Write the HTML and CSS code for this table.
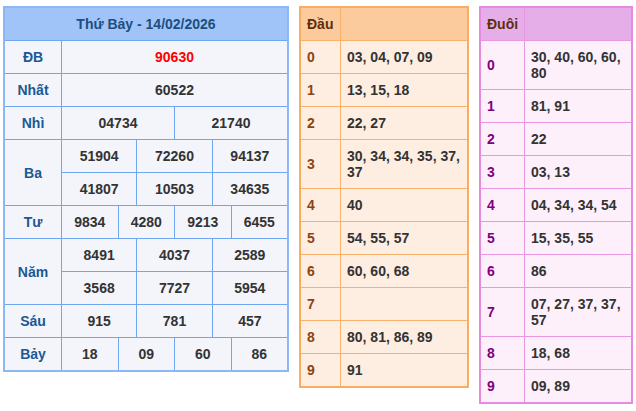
FILE: index.html
```html
<!DOCTYPE html>
<html lang="vi">
<head>
<meta charset="utf-8">
<title>Kết quả xổ số</title>
<link rel="stylesheet" href="styles.css">
</head>
<body>
<div class="page">
  <div class="kq">
    <div class="kq-title">Thứ Bảy - 14/02/2026</div>
    <div class="lbl">ĐB</div><div class="val s12 red">90630</div>
    <div class="lbl">Nhất</div><div class="val s12">60522</div>
    <div class="lbl">Nhì</div><div class="val s6">04734</div><div class="val s6">21740</div>
    <div class="lbl r2">Ba</div>
    <div class="val s4">51904</div><div class="val s4">72260</div><div class="val s4">94137</div>
    <div class="val s4">41807</div><div class="val s4">10503</div><div class="val s4">34635</div>
    <div class="lbl">Tư</div>
    <div class="val s3">9834</div><div class="val s3">4280</div><div class="val s3">9213</div><div class="val s3">6455</div>
    <div class="lbl r2">Năm</div>
    <div class="val s4">8491</div><div class="val s4">4037</div><div class="val s4">2589</div>
    <div class="val s4">3568</div><div class="val s4">7727</div><div class="val s4">5954</div>
    <div class="lbl">Sáu</div>
    <div class="val s4">915</div><div class="val s4">781</div><div class="val s4">457</div>
    <div class="lbl">Bảy</div>
    <div class="val s3">18</div><div class="val s3">09</div><div class="val s3">60</div><div class="val s3">86</div>
  </div>

  <div class="lt dau">
    <div class="lt-head">Đầu</div><div class="lt-head"></div>
    <div class="lt-key">0</div><div class="lt-val">03, 04, 07, 09</div>
    <div class="lt-key">1</div><div class="lt-val">13, 15, 18</div>
    <div class="lt-key">2</div><div class="lt-val">22, 27</div>
    <div class="lt-key">3</div><div class="lt-val">30, 34, 34, 35, 37, 37</div>
    <div class="lt-key">4</div><div class="lt-val">40</div>
    <div class="lt-key">5</div><div class="lt-val">54, 55, 57</div>
    <div class="lt-key">6</div><div class="lt-val">60, 60, 68</div>
    <div class="lt-key">7</div><div class="lt-val"></div>
    <div class="lt-key">8</div><div class="lt-val">80, 81, 86, 89</div>
    <div class="lt-key">9</div><div class="lt-val">91</div>
  </div>

  <div class="lt duoi">
    <div class="lt-head">Đuôi</div><div class="lt-head"></div>
    <div class="lt-key">0</div><div class="lt-val">30, 40, 60, 60, 80</div>
    <div class="lt-key">1</div><div class="lt-val">81, 91</div>
    <div class="lt-key">2</div><div class="lt-val">22</div>
    <div class="lt-key">3</div><div class="lt-val">03, 13</div>
    <div class="lt-key">4</div><div class="lt-val">04, 34, 34, 54</div>
    <div class="lt-key">5</div><div class="lt-val">15, 35, 55</div>
    <div class="lt-key">6</div><div class="lt-val">86</div>
    <div class="lt-key">7</div><div class="lt-val">07, 27, 37, 37, 57</div>
    <div class="lt-key">8</div><div class="lt-val">18, 68</div>
    <div class="lt-key">9</div><div class="lt-val">09, 89</div>
  </div>
</div>
</body>
</html>
```

FILE: styles.css
```css
* { box-sizing: border-box; }
html, body { margin: 0; padding: 0; background: #ffffff; }
body {
  font-family: "Liberation Sans", Arial, sans-serif;
  font-size: 14px;
  font-weight: bold;
  color: #333333;
}
.page {
  display: flex;
  align-items: flex-start;
  gap: 10px;
  padding: 6px 3px;
}

/* main result table */
.kq {
  width: 286px;
  display: grid;
  grid-template-columns: 56px repeat(12, 1fr);
  grid-auto-rows: 32px;
  gap: 1px;
  background: #6fa6f1;
  border: 2px solid #8cb8f6;
}
.kq-title {
  grid-column: 1 / -1;
  background: #a0c4f8;
  color: #1d4e7e;
  display: flex;
  align-items: center;
  justify-content: center;
}
.lbl {
  grid-column: 1;
  background: #f3f5fa;
  color: #1b5894;
  display: flex;
  align-items: center;
  justify-content: center;
}
.lbl.r2 { grid-row: span 2; }
.val {
  background: #f3f5fa;
  color: #333333;
  display: flex;
  align-items: center;
  justify-content: center;
}
.s12 { grid-column: span 12; }
.s6 { grid-column: span 6; }
.s4 { grid-column: span 4; }
.s3 { grid-column: span 3; }
.red { color: #ff0000; }

/* loto tables */
.lt {
  display: grid;
  gap: 1px;
  line-height: 16px;
}
.lt-head, .lt-key, .lt-val {
  padding: 8px 4px 8px 6px;
  display: flex;
  align-items: center;
}
.lt-head { height: 32px; }

.dau {
  width: 170px;
  grid-template-columns: 39px 1fr;
  background: #f8b26c;
  border: 2px solid #f9ad62;
}
.dau .lt-head { background: #fbcb9d; color: #5e2f0d; }
.dau .lt-key { background: #feede1; color: #8b4513; }
.dau .lt-val { background: #feede1; }

.duoi {
  width: 154px;
  grid-template-columns: 43px 1fr;
  background: #e997e3;
  border: 2px solid #e78be0;
}
.duoi .lt-head { background: #e5aee8; color: #5e2f0d; }
.duoi .lt-key { background: #fdf0fb; color: #800080; }
.duoi .lt-val { background: #fdf0fb; }
```
